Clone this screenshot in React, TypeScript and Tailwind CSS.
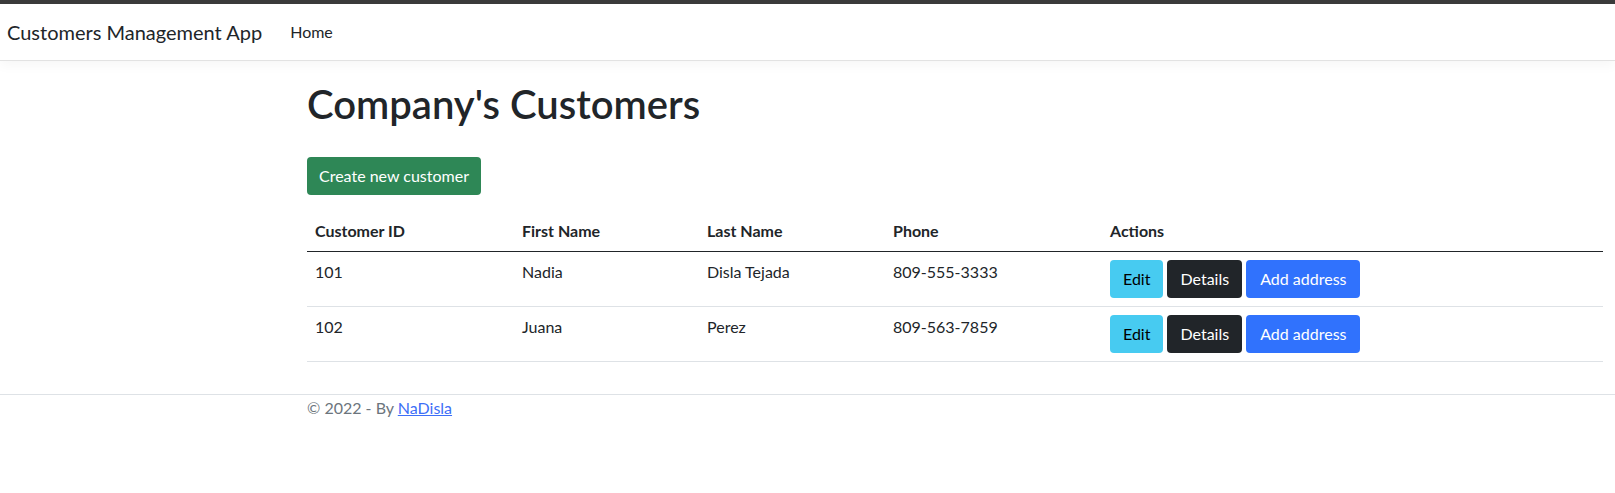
import React from "react";

const rows = [
  { id: "101", first: "Nadia", last: "Disla Tejada", phone: "809-555-3333" },
  { id: "102", first: "Juana", last: "Perez", phone: "809-563-7859" },
];

export default function App() {
  return (
    <div className="min-h-[493px] bg-white text-[#212529] text-[16px] leading-6" style={{ fontFamily: "Lato, 'Liberation Sans', sans-serif" }}>
      <div className="h-[4px] bg-[#3b3b3b]" />
      <nav className="flex h-[57px] items-center border-b border-[#e2e2e2] bg-white pl-[7px] shadow-[0_4px_12px_rgba(0,0,0,0.04)]">
        <span className="mr-5 text-[20px] leading-[30px] text-[#212529]">Customers Management App</span>
        <a className="px-2 text-[16px] text-[#212529]">Home</a>
      </nav>
      <div className="flex justify-end">
        <main className="w-[1320px] px-3 pt-[19px]">
          <h1 className="mb-[29px] text-[40px] font-semibold leading-[48px]">Company's Customers</h1>
          <div className="mb-4">
            <button className="h-[38px] rounded-[4px] bg-[#2e8756] px-3 text-white">Create new customer</button>
          </div>
          <table className="w-full border-collapse">
            <colgroup>
              <col className="w-[207px]" />
              <col className="w-[185px]" />
              <col className="w-[186px]" />
              <col className="w-[217px]" />
              <col />
            </colgroup>
            <thead>
              <tr className="border-b border-[#212529]">
                <th className="p-2 text-left font-bold">Customer ID</th>
                <th className="p-2 text-left font-bold">First Name</th>
                <th className="p-2 text-left font-bold">Last Name</th>
                <th className="p-2 text-left font-bold">Phone</th>
                <th className="p-2 text-left font-bold">Actions</th>
              </tr>
            </thead>
            <tbody>
              {rows.map((r) => (
                <tr key={r.id} className="border-b border-[#dee2e6] align-top">
                  <td className="p-2">{r.id}</td>
                  <td className="p-2">{r.first}</td>
                  <td className="p-2">{r.last}</td>
                  <td className="p-2">{r.phone}</td>
                  <td className="p-2">
                    <div className="flex gap-[4px]">
                      <button className="h-[38px] rounded-[4px] bg-[#47cbf1] px-[13px] text-black">Edit</button>
                      <button className="h-[38px] rounded-[4px] bg-[#212529] px-[13px] text-white">Details</button>
                      <button className="h-[38px] rounded-[4px] bg-[#3072fd] px-[14px] text-white">Add address</button>
                    </div>
                  </td>
                </tr>
              ))}
            </tbody>
          </table>
        </main>
      </div>
      <footer className="mt-[32px] border-t border-[#dee2e6]">
        <div className="flex justify-end">
          <div className="w-[1320px] px-3 pt-[1px] text-[#6c757d]">
            © 2022 - By <a className="text-[#3d6ff7] underline">NaDisla</a>
          </div>
        </div>
      </footer>
    </div>
  );
}
